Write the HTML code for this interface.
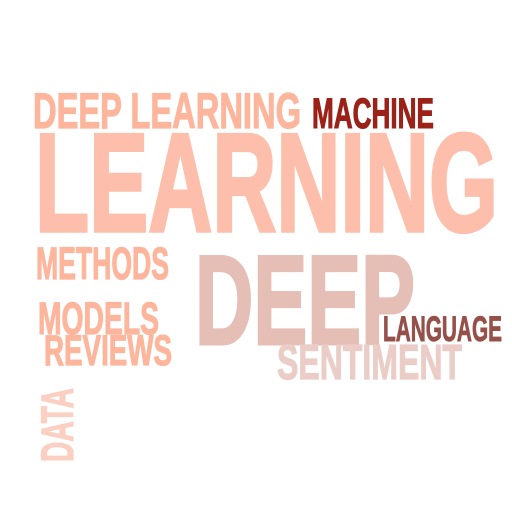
<!DOCTYPE html>
<html><head><meta charset="utf-8">
<style>
html,body{margin:0;padding:0;background:#fff;width:512px;height:512px;overflow:hidden}
text{font-family:"Liberation Sans Narrow","Liberation Sans",sans-serif;font-weight:bold;stroke-linejoin:miter}
</style></head>
<body>
<svg width="512" height="512" viewBox="0 0 512 512" xmlns="http://www.w3.org/2000/svg">
<text x="33" y="128" font-size="50" fill="#fdb59c" stroke="#fdb59c" stroke-width="1.2" textLength="268" lengthAdjust="spacingAndGlyphs">DEEP LEARNING</text>
<text x="312" y="128" font-size="43" fill="#9b2219" stroke="#9b2219" stroke-width="1.1" textLength="122" lengthAdjust="spacingAndGlyphs">MACHINE</text>
<text x="35" y="231" font-size="140" fill="#fdbfab" stroke="#fdbfab" stroke-width="3.5" textLength="463" lengthAdjust="spacingAndGlyphs">LEARNING</text>
<text x="36" y="279" font-size="45" fill="#fdb59c" stroke="#fdb59c" stroke-width="1.2" textLength="133" lengthAdjust="spacingAndGlyphs">METHODS</text>
<text x="195" y="344" font-size="127" fill="#e5beb5" stroke="#e5beb5" stroke-width="3" textLength="220" lengthAdjust="spacingAndGlyphs">DEEP</text>
<text x="38" y="334" font-size="45" fill="#fdb59c" stroke="#fdb59c" stroke-width="1.2" textLength="121" lengthAdjust="spacingAndGlyphs">MODELS</text>
<text x="383" y="341" font-size="35" fill="#955049" stroke="#955049" stroke-width="0.9" textLength="119" lengthAdjust="spacingAndGlyphs">LANGUAGE</text>
<text x="44" y="365" font-size="43" fill="#fdb59c" stroke="#fdb59c" stroke-width="1.2" textLength="128" lengthAdjust="spacingAndGlyphs">REVIEWS</text>
<text x="277" y="379" font-size="49" fill="#ebcdc8" stroke="#ebcdc8" stroke-width="1.2" textLength="185" lengthAdjust="spacingAndGlyphs">SENTIMENT</text>
<text transform="translate(73,462) rotate(-90)" font-size="45" fill="#fbd0c2" stroke="#fbd0c2" stroke-width="1.2" textLength="74" lengthAdjust="spacingAndGlyphs">DATA</text>
</svg>
</body></html>
